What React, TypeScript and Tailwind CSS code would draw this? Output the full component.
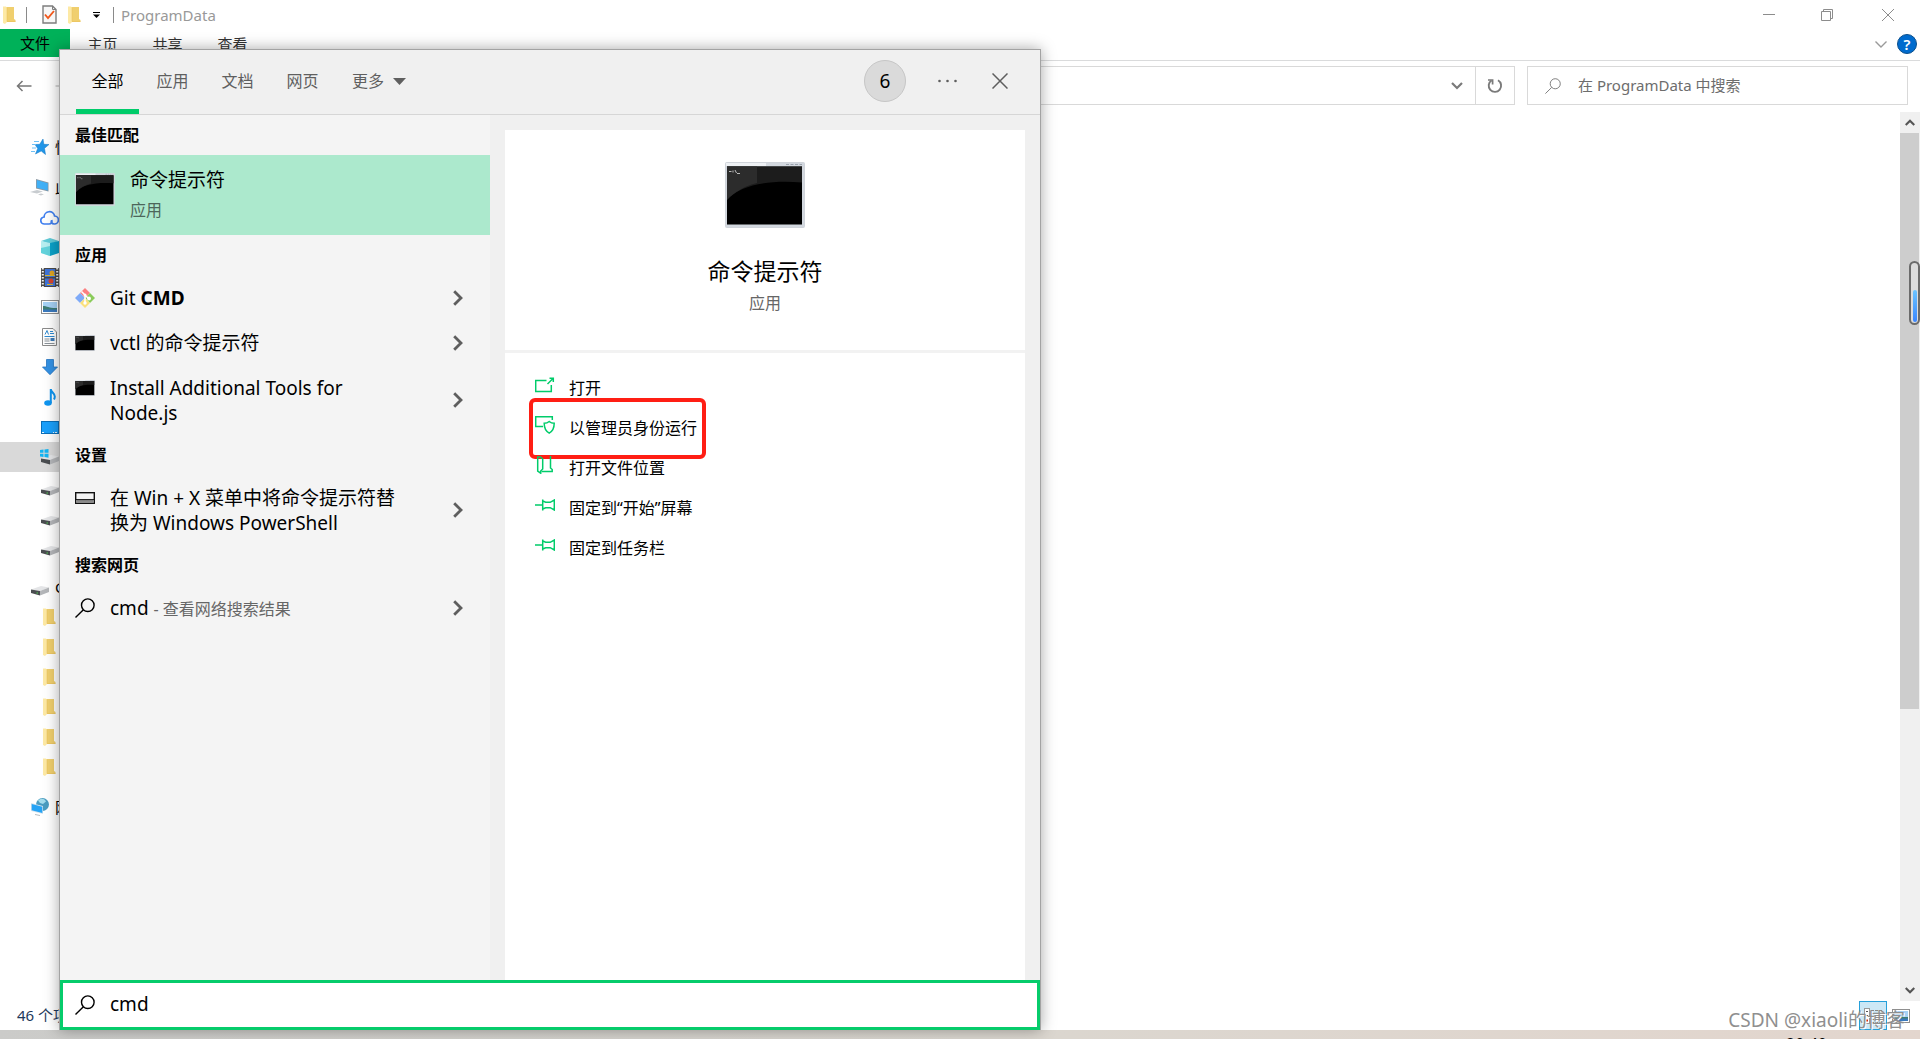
import { useState, type ReactNode } from 'react'

type IconProps = { className?: string }

/* ---------- icons ---------- */

function FolderIcon({ className = '' }: IconProps) {
  return (
    <svg className={className} width="13" height="18" viewBox="0 0 13 18">
      <path d="M2 1h9v12l1.500 1v2H3z" fill="#f0cf6e" />
      <path d="M0 0.500h3l1 1.500v14l-2 2-2-1z" fill="#fde9a5" />
      <path d="M4 2v13.500h8.500" fill="none" stroke="#e8bf58" strokeWidth="0.500" />
    </svg>
  )
}

function CheckDocIcon() {
  return (
    <svg width="15" height="19" viewBox="0 0 15 19">
      <path d="M1 1h9.500L14 4.500V18H1z" fill="#f7f7f7" stroke="#7d7d7d" strokeWidth="1.400" />
      <path d="M10.500 1v3.500H14" fill="none" stroke="#7d7d7d" />
      <path d="M3 9.500l3 3.500 6-7" fill="none" stroke="#f0581c" strokeWidth="1.900" />
    </svg>
  )
}

function SearchIcon({ size = 20, stroke = 1.4 }: { size?: number; stroke?: number }) {
  return (
    <svg width={size} height={size} viewBox="0 0 20 20" fill="none" stroke="currentColor" strokeWidth={stroke}>
      <circle cx="12.800" cy="7.200" r="6.300" />
      <path d="M8.400 11.700L0.500 19.500" />
    </svg>
  )
}

function ChevronRight() {
  return (
    <svg className="shrink-0 text-[#5e5e5e]" width="10" height="16" viewBox="0 0 10 16" fill="none" stroke="currentColor" strokeWidth="2.800">
      <path d="M1.200 1.200L8 8l-6.800 6.800" />
    </svg>
  )
}

function CmdIcon({ width, height }: { width: number; height: number }) {
  return (
    <svg width={width} height={height} viewBox="0 0 80 66" preserveAspectRatio="none">
      <rect x="0.500" y="0.500" width="79" height="65" rx="1" fill="#d3d8df" stroke="#d0d4da" />
      <rect x="1" y="1" width="40" height="3" fill="#eef1f4" />
      <path d="M61 2.500h16" stroke="#9aa2ac" strokeDasharray="3 1.500" />
      <rect x="2" y="4.500" width="75" height="58" fill="#000" />
      <path d="M2 4.500h75v16C45 18 16 22 2 38z" fill="#1c1c1c" />
      <path d="M2 4.500h30v16.500C20 24 9 30 2 38z" fill="#2c2c2c" />
      <path d="M4 9.500h2.500M8 8.500v2M10 8l1.500 3M12 11.500h3" stroke="#bbb" fill="none" />
    </svg>
  )
}

function GitIcon() {
  return (
    <svg width="20" height="20" viewBox="0 0 20 20">
      <path d="M10 0l5 5-5 5-5-5z" fill="#fb7f80" />
      <path d="M5 5l5 5-5 5-5-5z" fill="#7eaaf8" />
      <path d="M15 5l5 5-5 5-5-5z" fill="#8acb5a" />
      <path d="M10 10l5 5-5 5-5-5z" fill="#fbe07c" />
      <path d="M6.500 3.500L13 10M10 7v8" stroke="#fff" strokeWidth="1.500" />
      <circle cx="10" cy="15" r="1.700" fill="#fff" />
      <circle cx="14" cy="10.500" r="1.900" fill="#fff" />
      <circle cx="10" cy="7" r="1.500" fill="#fff" />
    </svg>
  )
}

function ConsoleSettingIcon() {
  return (
    <svg width="20" height="12" viewBox="0 0 20 12">
      <rect x="0.700" y="0.700" width="18.600" height="10.600" fill="none" stroke="#111" strokeWidth="1.400" />
      <rect x="1.400" y="8" width="17.200" height="3" fill="#8a8a8a" />
      <path d="M1 7.600h18" stroke="#111" />
    </svg>
  )
}

function StarIcon() {
  return (
    <svg width="18" height="16" viewBox="0 0 18 16">
      <path d="M12 0l.8 5.300 5.200.2-4.500 3.800 1 6.200-4.300-3.500L4.500 15l2.200-5.500L4 5.500l4.700-.2z" fill="#2196e8" stroke="#1579c4" strokeWidth="0.500" />
      <path d="M3 2.500h5M1 5.500h4M1 9h4M0 12.500h4" stroke="#6fc0f5" />
    </svg>
  )
}

function PcIcon() {
  return (
    <svg width="19" height="17" viewBox="0 0 19 17">
      <path d="M6 0l12.500 3.500v9L6 9.500z" fill="#8b98a3" />
      <path d="M6.800 1l11 3.200v7.300L6.800 8.700z" fill="#41b0f6" />
      <path d="M0 13l7-2 6 1.500-6 2zM8 15.500l3-1 3 .7-3 1.300z" fill="#c8ccd0" />
    </svg>
  )
}

function CloudIcon() {
  return (
    <svg width="19" height="15" viewBox="0 0 19 15" fill="none" stroke="#3f7ff0" strokeWidth="1.700">
      <path d="M9 14H4.500a3.500 3.500 0 0 1-.4-7A5.300 5.300 0 0 1 14.600 6a4 4 0 0 1-.4 8c-2.500 0-3.500-2-2.500-3.500" />
      <path d="M9 14c2.200 0 3.200-1.500 2.800-4" />
    </svg>
  )
}

function CubeIcon() {
  return (
    <svg width="18" height="18" viewBox="0 0 18 18">
      <path d="M9 0l9 3-9 3-9-3z" fill="#5fcbd8" />
      <path d="M0 3l9 2v13l-9-3z" fill="#b7eef0" />
      <path d="M0 10l9-2v10l-9-3z" fill="#63d3dc" />
      <path d="M18 3L9 5v13l9-3z" fill="#0aa2c9" />
    </svg>
  )
}

function FilmIcon() {
  return (
    <svg width="18" height="19" viewBox="0 0 18 19">
      <rect width="18" height="19" fill="#4a4a4a" />
      <path d="M1.800 0v19M16.200 0v19" stroke="#f2f2f2" strokeWidth="2" strokeDasharray="1.500 1.500" />
      <path d="M4 1h10v8H4zM4 10.500h10V18H4z" fill="#3f74d8" />
      <circle cx="11" cy="5" r="2.500" fill="#e0a421" />
      <circle cx="10" cy="13" r="2.500" fill="#d8452c" />
      <path d="M4 7.500h10M6 16.500h6" stroke="#d8b62c" />
    </svg>
  )
}

function PictureIcon() {
  return (
    <svg width="18" height="14" viewBox="0 0 18 14">
      <rect x="0.500" y="0.500" width="17" height="13" fill="#fff" stroke="#8f8f8f" />
      <rect x="2" y="2" width="14" height="10" fill="#a6d1f5" />
      <path d="M2 6c4 0 7 2.500 14 2v4H2z" fill="#3f7d74" />
      <path d="M2 9.500h14V12H2z" fill="#3a79bd" />
    </svg>
  )
}

function DocIcon() {
  return (
    <svg width="15" height="18" viewBox="0 0 15 18">
      <path d="M0.500 0.500H11L14.500 4v13.500H.5z" fill="#fff" stroke="#8b8b8b" />
      <path d="M3 6.500l2-4 1.500 4M8 3.500h3M8 5.500h4M2.500 8.500h10" stroke="#2f8ad0" fill="none" />
      <path d="M2.500 11h5M2.500 13h5M2.500 15.500h10" stroke="#8a9299" />
      <rect x="8.500" y="10" width="4" height="3" fill="#3d7bb8" />
    </svg>
  )
}

function DownArrowIcon() {
  return (
    <svg width="16" height="16" viewBox="0 0 16 16">
      <path d="M4.500 0.500h7V8h4L8 15.700.5 8h4z" fill="#3391e4" stroke="#2574c0" strokeWidth="0.800" />
    </svg>
  )
}

function NoteIcon() {
  return (
    <svg width="12" height="18" viewBox="0 0 12 18">
      <ellipse cx="4" cy="15" rx="3.800" ry="2.800" fill="#0f95f0" />
      <path d="M6.800 15V1c0 3 4 4 4 7.500 0 1-.3 2-.8 3" fill="none" stroke="#0f95f0" strokeWidth="2" />
    </svg>
  )
}

function DesktopIcon() {
  return (
    <svg width="18" height="13" viewBox="0 0 18 13">
      <rect x="0.500" y="0.500" width="17" height="12" fill="#1aa0fb" stroke="#0b6fb8" />
      <path d="M1 11.500h16" stroke="#e6f4ff" strokeDasharray="2 9 1 1" />
    </svg>
  )
}

function DriveIcon() {
  return (
    <svg className="mt-2" width="18" height="10" viewBox="0 0 18 10">
      <path d="M0 3.500L10 0l8 1.500L9 5z" fill="#e4e5e7" />
      <path d="M0 3.500L9 5v4.500L0 7z" fill="#4a4d50" />
      <path d="M9 5l9-3.500V6L9 9.500z" fill="#b4b6b9" />
      <path d="M5.500 7h1.500" stroke="#4fd04f" />
    </svg>
  )
}

function SystemDriveIcon() {
  return (
    <svg width="19" height="16" viewBox="0 0 19 16">
      <path d="M1 9.500L11 6l8 1.500L10 11z" fill="#e4e5e7" />
      <path d="M1 9.500l9 1.500v4.500L1 13z" fill="#4a4d50" />
      <path d="M10 11l9-3.500V12l-9 3.500z" fill="#b4b6b9" />
      <path d="M0 1l3.500-.5v3.200H0zM4.500 .4L8.500 0v3.700h-4zM0 4.700h3.500V8L0 7.500zM4.500 4.700h4v4l-4-.6z" fill="#12b4f2" />
    </svg>
  )
}

function NetworkIcon() {
  return (
    <svg width="18" height="18" viewBox="0 0 18 18">
      <circle cx="11.500" cy="6.500" r="6.500" fill="#4a9cc0" />
      <path d="M7 2.500c3-3 7-2 8 1l-3 2.500-3-1z" fill="#a4dcec" />
      <path d="M0 5l12 3v8L0 13z" fill="#d5e3ec" />
      <path d="M.7 6l10.600 2.700v6.300L.7 12.300z" fill="#25a3f5" />
      <path d="M4 16.500l5 1" stroke="#b7bcc0" />
    </svg>
  )
}

function OpenIcon() {
  return (
    <svg width="20" height="16" viewBox="0 0 20 16" fill="none" stroke="currentColor" strokeWidth="1.500">
      <path d="M11.500 3.500H.7v11h15.600V8" />
      <path d="M12.500 7L18 1.500M14.500 1.200h3.800v3.800" />
    </svg>
  )
}

function AdminIcon() {
  return (
    <svg width="20" height="18" viewBox="0 0 20 18" fill="none" stroke="currentColor" strokeWidth="1.500">
      <path d="M8 10.500H.7V.7h16.600V4" />
      <path d="M14.200 5.500c1.500 1.300 3 1.800 5 1.800 0 5-1.500 8-5 9.800-3.500-1.800-5-4.800-5-9.800 2 0 3.500-.5 5-1.800z" />
    </svg>
  )
}

function FileLocationIcon() {
  return (
    <svg width="20" height="18" viewBox="0 0 20 18" fill="none" stroke="currentColor" strokeWidth="1.500">
      <path d="M2.700 1v14l3 2.200V15L7.700 13V3L5.500 1z" />
      <path d="M15.500 0v12l1.700 1.500v2H6.500" />
    </svg>
  )
}

function PinIcon() {
  return (
    <svg width="20" height="12" viewBox="0 0 20 12" fill="none" stroke="currentColor" strokeWidth="1.500">
      <path d="M0 6h7.500M7.700.5v11M7.700 2l3 1.300h4.500L19.300 1v10l-4.100-2.300h-4.500l-3 1.300" />
    </svg>
  )
}

/* ---------- explorer window ---------- */

type TreeRow = { icon: ReactNode; label?: string; child?: boolean; selected?: boolean }

const treeGroups: TreeRow[][] = [
  [{ icon: <StarIcon />, label: '快速访问' }],
  [
    { icon: <PcIcon />, label: '此电脑' },
    { icon: <CloudIcon />, child: true },
    { icon: <CubeIcon />, child: true },
    { icon: <FilmIcon />, child: true },
    { icon: <PictureIcon />, child: true },
    { icon: <DocIcon />, child: true },
    { icon: <DownArrowIcon />, child: true },
    { icon: <NoteIcon />, child: true },
    { icon: <DesktopIcon />, child: true },
    { icon: <SystemDriveIcon />, child: true, selected: true },
    { icon: <DriveIcon />, child: true },
    { icon: <DriveIcon />, child: true },
    { icon: <DriveIcon />, child: true },
  ],
  [
    { icon: <DriveIcon />, label: 'G' },
    { icon: <FolderIcon />, child: true },
    { icon: <FolderIcon />, child: true },
    { icon: <FolderIcon />, child: true },
    { icon: <FolderIcon />, child: true },
    { icon: <FolderIcon />, child: true },
    { icon: <FolderIcon />, child: true },
  ],
  [{ icon: <NetworkIcon />, label: '网络' }],
]

function TitleBar() {
  return (
    <div className="flex h-[29px] shrink-0 items-center justify-between">
      <div className="flex items-center pl-[3px]">
        <FolderIcon />
        <span className="ml-2.5 h-4 w-px bg-[#8a8a8a]" />
        <button aria-label="属性" className="ml-[15px]"><CheckDocIcon /></button>
        <button aria-label="新建文件夹" className="ml-[11px]"><FolderIcon /></button>
        <button aria-label="自定义快速访问工具栏" className="ml-3">
          <svg width="7" height="6" viewBox="0 0 7 6"><path d="M0 .5h7" stroke="#000" /><path d="M0 2.500h7L3.500 6z" /></svg>
        </button>
        <span className="ml-[13px] h-4 w-px bg-[#8a8a8a]" />
        <span className="ml-[7px] text-[15px] leading-5 text-[#999]">ProgramData</span>
      </div>
      <div className="flex items-center text-[#8c8c8c]">
        <button aria-label="最小化" className="flex w-[58px] justify-center">
          <svg width="12" height="12" viewBox="0 0 12 12" stroke="currentColor"><path d="M0 5.500h12" /></svg>
        </button>
        <button aria-label="还原" className="flex w-[58px] justify-center">
          <svg width="12" height="12" viewBox="0 0 12 12" fill="none" stroke="currentColor"><path d="M.5 2.500h9v9h-9zM2.500 2.500v-2h9v9h-2" /></svg>
        </button>
        <button aria-label="关闭" className="flex w-16 justify-center">
          <svg width="12" height="12" viewBox="0 0 12 12" stroke="currentColor"><path d="M0 0l12 12M12 0L0 12" /></svg>
        </button>
      </div>
    </div>
  )
}

function Ribbon() {
  return (
    <div className="flex h-8 shrink-0 items-start justify-between border-b border-[#dadbdc] text-[15px]">
      <div className="flex">
        <button className="h-7 w-[70px] bg-[#00b159] text-black">文件</button>
        {['主页', '共享', '查看'].map(tab => (
          <button key={tab} className="h-7 w-[65px] pt-0.5 text-[#333]">{tab}</button>
        ))}
      </div>
      <div className="flex h-[30px] items-center gap-2.5 pr-[3px]">
        <button aria-label="展开功能区">
          <svg width="12" height="7" viewBox="0 0 12 7" fill="none" stroke="#9a9a9a" strokeWidth="1.400"><path d="M.5.5L6 6 11.500.5" /></svg>
        </button>
        <button className="flex size-5 items-center justify-center rounded-full border border-[#0b4f8c] bg-[#006bce] text-[15px] leading-none font-semibold text-white">?</button>
      </div>
    </div>
  )
}

function AddressBar() {
  return (
    <div className="flex h-[51px] shrink-0 items-center pr-3 pb-0.5 pl-4 text-[#7a7a7a]">
      <button aria-label="后退">
        <svg width="16" height="12" viewBox="0 0 16 12" fill="none" stroke="#777" strokeWidth="1.500"><path d="M15.500 6H1.500M6.500 1l-5 5 5 5" /></svg>
      </button>
      <button aria-label="前进" className="ml-[23px]">
        <svg width="16" height="12" viewBox="0 0 16 12" fill="none" stroke="#ccc" strokeWidth="1.500"><path d="M.5 6h14M9.500 1l5 5-5 5" /></svg>
      </button>
      <div className="ml-12 flex h-[39px] flex-1 items-stretch border border-[#d9d9d9]">
        <div className="flex flex-1 items-center justify-end pr-3">
          <button aria-label="历史记录">
            <svg width="12" height="8" viewBox="0 0 12 8" fill="none" stroke="currentColor" strokeWidth="2.200"><path d="M1 1l5 5 5-5" /></svg>
          </button>
        </div>
        <button aria-label="刷新" className="flex w-[39px] items-center justify-center border-l border-[#d9d9d9]">
          <svg width="16" height="16" viewBox="0 0 16 16" fill="none" stroke="currentColor" strokeWidth="1.900">
            <path d="M11 2.300A6.200 6.200 0 1 1 4.500 2.500" />
            <path d="M1 2h4.600v4.600" strokeWidth="1.700" />
          </svg>
        </button>
      </div>
      <label className="ml-3 flex h-[39px] w-[381px] items-center border border-[#d9d9d9] pl-[17px]">
        <SearchIcon size={16} stroke={1.2} />
        <input
          aria-label="搜索"
          placeholder="在 ProgramData 中搜索"
          className="ml-[17px] min-w-0 flex-1 text-[15px] outline-none placeholder:text-[#6d6d6d]"
        />
      </label>
    </div>
  )
}

function NavTree() {
  return (
    <nav className="flex w-[260px] flex-col gap-2.5 pt-5">
      {treeGroups.map((group, g) => (
        <div key={g}>
          {group.map((row, i) => (
            <div key={i} className={`flex h-[30px] items-center ${row.child ? 'pl-10' : 'pl-[30px]'} ${row.selected ? 'bg-[#d9d9d9]' : ''}`}>
              <span className="flex w-[19px] justify-center">{row.icon}</span>
              {row.label && <span className="ml-1.5 text-[15px] leading-5 text-black">{row.label}</span>}
            </div>
          ))}
        </div>
      ))}
    </nav>
  )
}

function ScrollBar() {
  return (
    <div className="flex w-5 flex-col bg-[#f0f0f0] text-[#555]">
      <button aria-label="向上滚动" className="flex h-[21px] shrink-0 items-center justify-center">
        <svg width="10" height="7" viewBox="0 0 10 7" fill="none" stroke="currentColor" strokeWidth="2.200"><path d="M.7 6L5 1.700 9.300 6" /></svg>
      </button>
      <div className="flex-1 pr-px">
        <div className="h-[68%] bg-[#cdcdcd]" />
      </div>
      <button aria-label="向下滚动" className="flex h-[21px] shrink-0 items-center justify-center">
        <svg width="10" height="7" viewBox="0 0 10 7" fill="none" stroke="currentColor" strokeWidth="2.200"><path d="M.7 1L5 5.300 9.300 1" /></svg>
      </button>
    </div>
  )
}

function StatusBar() {
  return (
    <div className="flex h-[29px] shrink-0 items-center justify-between pr-2.5 pl-[17px]">
      <span className="pb-0.5 text-[15px] leading-5 text-[#1e395b]">46 个项目</span>
      <div className="flex items-center gap-[5px]">
        <button aria-label="详细信息" className="flex h-[29px] w-7 items-center justify-center border border-[#26a0da] bg-[#cce8f6]">
          <svg width="18" height="16" viewBox="0 0 18 16" fill="none">
            <rect x="0.500" y="0.500" width="5" height="15" fill="#fff" stroke="#9a9a9a" />
            <path d="M2 3.500h2M2 7.500h2" stroke="#555" />
            <path d="M2 12.500h2" stroke="#c22" strokeWidth="2" />
            <path d="M7 2.500h11M7 5.500h11M7 8.500h11M7 11.500h11M7 14.500h11" stroke="#888" strokeDasharray="3 1" />
          </svg>
        </button>
        <button aria-label="大缩略图"><PictureIcon /></button>
      </div>
    </div>
  )
}

/* ---------- search flyout ---------- */

const tabs = ['全部', '应用', '文档', '网页']

type Result = { icon: ReactNode; text: ReactNode }

const sections: { title: string; items: Result[] }[] = [
  {
    title: '应用',
    items: [
      { icon: <GitIcon />, text: <>Git <b>CMD</b></> },
      { icon: <CmdIcon width={20} height={16} />, text: 'vctl 的命令提示符' },
      { icon: <CmdIcon width={20} height={16} />, text: 'Install Additional Tools for Node.js' },
    ],
  },
  {
    title: '设置',
    items: [{ icon: <ConsoleSettingIcon />, text: '在 Win + X 菜单中将命令提示符替换为 Windows PowerShell' }],
  },
  {
    title: '搜索网页',
    items: [
      {
        icon: <SearchIcon />,
        text: <>cmd <span className="text-[16px] text-[#666]">- 查看网络搜索结果</span></>,
      },
    ],
  },
]

const actions = [
  { icon: <OpenIcon />, label: '打开' },
  { icon: <AdminIcon />, label: '以管理员身份运行', marked: true },
  { icon: <FileLocationIcon />, label: '打开文件位置' },
  { icon: <PinIcon />, label: '固定到“开始”屏幕' },
  { icon: <PinIcon />, label: '固定到任务栏' },
]

function SectionTitle({ children }: { children: ReactNode }) {
  return <h2 className="flex h-10 items-center pl-[15px] text-[16px] font-bold">{children}</h2>
}

function FlyoutHeader() {
  const [active, setActive] = useState('全部')

  return (
    <div className="flex h-[65px] shrink-0 items-center justify-between border-b border-[#d6d6d6] bg-[#f0f0f0] pr-8 pl-4">
      <div className="flex h-full gap-0.5 text-[16px] text-[#5f5f5f]">
        {tabs.map(tab => (
          <button
            key={tab}
            onClick={() => setActive(tab)}
            className={`w-[63px] border-t-[3px] border-b-[5px] border-t-transparent ${tab === active ? 'border-b-[#00cc6a] text-black' : 'border-b-transparent'}`}
          >
            {tab}
          </button>
        ))}
        <button className="flex items-center gap-[9px] pb-0.5 pl-4">
          更多
          <svg width="13" height="7" viewBox="0 0 13 7" fill="currentColor"><path d="M0 0h13L6.500 7z" /></svg>
        </button>
      </div>
      <div className="flex items-center pb-0.5 text-[#5e5e5e]">
        <button className="flex size-[42px] items-center justify-center rounded-full border border-[#c6c6c6] bg-[#dadada] text-[19px] text-black">6</button>
        <button aria-label="选项" className="ml-8">
          <svg width="19" height="4" viewBox="0 0 19 4" fill="currentColor"><circle cx="1.500" cy="2" r="1.300" /><circle cx="9.500" cy="2" r="1.300" /><circle cx="17.500" cy="2" r="1.300" /></svg>
        </button>
        <button aria-label="关闭搜索" className="ml-[35px]">
          <svg width="16" height="16" viewBox="0 0 16 16" stroke="currentColor" strokeWidth="1.500"><path d="M.5.5l15 15M15.500.5l-15 15" /></svg>
        </button>
      </div>
    </div>
  )
}

function ResultList() {
  return (
    <div className="w-[430px] shrink-0 bg-[#f4f4f4]">
      <SectionTitle>最佳匹配</SectionTitle>
      <button className="flex h-20 w-full items-start bg-[#ace9cd] pl-[15px] text-left">
        <span className="mt-[18px]"><CmdIcon width={40} height={33} /></span>
        <span className="mt-2.5 ml-[15px]">
          <span className="block text-[19px] leading-[30px]">命令提示符</span>
          <span className="block text-[16px] leading-[30px] text-[#4c665a]">应用</span>
        </span>
      </button>
      {sections.map(section => (
        <section key={section.title}>
          <SectionTitle>{section.title}</SectionTitle>
          {section.items.map((item, i) => (
            <button key={i} className="flex w-full items-center pt-[11px] pr-[27px] pb-[9px] pl-[15px] text-left">
              <span className="flex h-[25px] w-5 shrink-0 items-center self-start pb-0.5">{item.icon}</span>
              <span className="ml-[15px] w-[300px] text-[19px] leading-[25px]">{item.text}</span>
              <span className="ml-auto pb-0.5"><ChevronRight /></span>
            </button>
          ))}
        </section>
      ))}
    </div>
  )
}

function DetailPane() {
  return (
    <div className="flex flex-1 flex-col bg-[#f0f0f0] pt-[15px] pr-[15px] pl-[15px]">
      <div className="flex h-[220px] shrink-0 flex-col items-center bg-white pt-8">
        <CmdIcon width={80} height={66} />
        <h1 className="mt-7 text-[23px] leading-[30px]">命令提示符</h1>
        <div className="mt-[5px] text-[16px] leading-6 text-[#666]">应用</div>
      </div>
      <div className="flex-1 border-t-[3px] border-[#f2f2f2] bg-white pt-[15px] pl-[30px]">
        {actions.map(action => (
          <button key={action.label} className="relative flex h-10 items-center pr-0.5 text-[16px] leading-6">
            <span className="w-5 pb-1.5 text-[#00cc6a]">{action.icon}</span>
            <span className="ml-3.5">{action.label}</span>
            {action.marked && <span className="absolute -top-2.5 -right-[7px] -bottom-[11px] -left-[6px] rounded-md border-4 border-[#ff1e14]" />}
          </button>
        ))}
      </div>
    </div>
  )
}

function SearchFlyout() {
  const [query, setQuery] = useState('cmd')

  return (
    <div className="absolute top-[49px] bottom-[9px] left-[59px] flex w-[982px] flex-col border border-b-0 border-[#a3a3a3] shadow-[0_0_14px_rgba(0,0,0,0.35)]">
      <FlyoutHeader />
      <div className="flex flex-1">
        <ResultList />
        <DetailPane />
      </div>
      <label className="flex h-[50px] shrink-0 items-center border-[3px] border-[#06cc6b] bg-white pl-3">
        <SearchIcon />
        <input
          aria-label="搜索内容"
          value={query}
          onChange={e => setQuery(e.target.value)}
          className="ml-[15px] flex-1 pb-0.5 text-[19px] outline-none"
        />
      </label>
    </div>
  )
}

export default function App() {
  return (
    <div className="relative flex h-screen flex-col overflow-hidden bg-white font-['Noto_Sans','Noto_Sans_CJK_SC',sans-serif] text-black">
      <TitleBar />
      <Ribbon />
      <AddressBar />
      <div className="flex min-h-0 flex-1">
        <NavTree />
        <main className="flex-1" />
        <ScrollBar />
      </div>
      <StatusBar />
      <footer className="flex h-[9px] shrink-0 items-start justify-end overflow-hidden bg-linear-to-r from-[#cbcbc9] via-[#dad6cf] to-[#e3d6ce] pr-[93px] text-[16px] leading-6">
        <span className="mt-0.5">20:40</span>
      </footer>

      <SearchFlyout />

      {/* floating memory gauge on the right edge */}
      <div className="absolute top-[261px] right-0 flex h-16 w-[11px] items-end justify-center rounded-full border-2 border-[#6b6b6b] bg-[#dcdcdc] pb-px">
        <span className="h-8 w-1 rounded-full bg-linear-to-b from-[#6cc4ff] to-[#3c86ff]" />
      </div>
      <div className="absolute right-[15px] bottom-[7px] text-[19px] leading-6 text-[#8f8f8f] [text-shadow:1px_1px_0_#fff]">CSDN @xiaoli的博客</div>
    </div>
  )
}
